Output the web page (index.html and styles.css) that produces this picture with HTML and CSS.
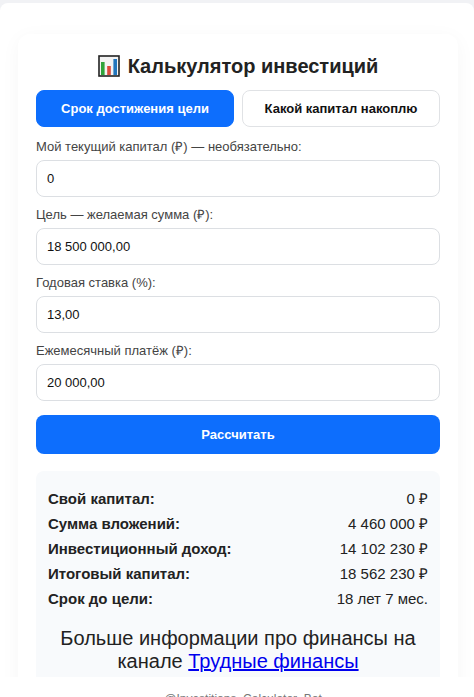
FILE: index.html
```html
<!DOCTYPE html>
<html lang="ru">
<head>
    <meta charset="UTF-8">
    <meta name="viewport" content="width=device-width, initial-scale=1.0">
    <title>Калькулятор инвестиций</title>
    <link rel="stylesheet" href="styles.css">
</head>
<body>
    <div class="sheet">
        <main class="content">
            <form class="card">
                <h1 class="title">
                    <svg class="title-icon" viewBox="0 0 22 22" aria-hidden="true">
                        <rect x="1" y="1" width="20" height="20" fill="#f3f3f3" stroke="#222" stroke-width="1.6"/>
                        <rect x="3" y="7" width="3.6" height="13" fill="#2fa33a"/>
                        <rect x="9.2" y="11" width="3.6" height="9" fill="#dc4a3c"/>
                        <rect x="15.4" y="4" width="3.6" height="16" fill="#2276bd"/>
                    </svg>
                    Калькулятор инвестиций
                </h1>
                <div class="tabs">
                    <button type="button" class="tab active">Срок достижения цели</button>
                    <button type="button" class="tab">Какой капитал накоплю</button>
                </div>
                <div class="field">
                    <label for="capital">Мой текущий капитал (₽) — необязательно:</label>
                    <input type="text" id="capital" name="capital" value="0">
                </div>
                <div class="field">
                    <label for="goal">Цель — желаемая сумма (₽):</label>
                    <input type="text" id="goal" name="goal" value="18 500 000,00">
                </div>
                <div class="field">
                    <label for="rate">Годовая ставка (%):</label>
                    <input type="text" id="rate" name="rate" value="13,00">
                </div>
                <div class="field">
                    <label for="payment">Ежемесячный платёж (₽):</label>
                    <input type="text" id="payment" name="payment" value="20 000,00">
                </div>
                <button type="button" class="submit">Рассчитать</button>
                <section class="result">
                    <div class="row"><strong>Свой капитал:</strong><span>0 ₽</span></div>
                    <div class="row"><strong>Сумма вложений:</strong><span>4 460 000 ₽</span></div>
                    <div class="row"><strong>Инвестиционный доход:</strong><span>14 102 230 ₽</span></div>
                    <div class="row"><strong>Итоговый капитал:</strong><span>18 562 230 ₽</span></div>
                    <div class="row"><strong>Срок до цели:</strong><span>18 лет 7 мес.</span></div>
                    <p class="more">Больше информации про финансы на канале <a href="#">Трудные финансы</a></p>
                </section>
            </form>
        </main>
        <footer class="bot">@Investitions_Calculator_Bot</footer>
    </div>
</body>
</html>
```

FILE: styles.css
```css
* {
    box-sizing: border-box;
}
body {
    margin: 0;
    padding-top: 3px;
    height: 100vh;
    overflow: hidden;
    font-family: "Liberation Sans", Arial, sans-serif;
    background-color: #f1f2f5;
    color: #222;
}
.sheet {
    display: flex;
    flex-direction: column;
    height: 100%;
    background: #fff;
    border-radius: 8px 8px 0 0;
    overflow: hidden;
}
.content {
    flex: 1;
    min-height: 0;
    padding: 31px 16px 0 18px;
    overflow: hidden;
}
.card {
    padding: 18px;
    background: #fff;
    border-radius: 12px;
    box-shadow: 0 4px 20px rgba(0, 0, 0, 0.04);
}
.title {
    display: flex;
    justify-content: center;
    align-items: center;
    gap: 8px;
    margin: 0 0 10px;
    font-size: 20px;
    line-height: 28px;
}
.title-icon {
    width: 22px;
    height: 22px;
}
.tabs {
    display: flex;
    gap: 8px;
    margin-bottom: 12px;
}
.tab {
    flex: 1;
    height: 37px;
    padding: 0;
    border: 1px solid #e0e2e5;
    border-radius: 8px;
    background: #fff;
    color: #111;
    font: bold 13px "Liberation Sans", Arial, sans-serif;
    cursor: pointer;
}
.tab.active {
    background: #0d6efd;
    border-color: #0d6efd;
    color: #fff;
}
.field {
    margin-bottom: 10px;
}
.field label {
    display: block;
    margin-bottom: 6px;
    font-size: 13px;
    line-height: 15px;
    color: #444;
}
.field input {
    display: block;
    width: 100%;
    height: 37px;
    padding: 0 10px;
    border: 1px solid #dcdfe3;
    border-radius: 8px;
    background: #fff;
    color: #111;
    font: 13px "Liberation Sans", Arial, sans-serif;
}
.submit {
    display: block;
    width: 100%;
    height: 39px;
    margin-top: 14px;
    border: none;
    border-radius: 8px;
    background: #0d6efd;
    color: #fff;
    font: bold 13px "Liberation Sans", Arial, sans-serif;
    cursor: pointer;
}
.result {
    margin-top: 17px;
    padding: 15px 12px;
    background: #f8fafc;
    border-radius: 8px;
}
.row {
    display: flex;
    justify-content: space-between;
    font-size: 15px;
    line-height: 25px;
}
.more {
    margin: 16px 0 0;
    font-size: 20px;
    line-height: 23px;
    text-align: center;
}
.more a {
    color: #0000ee;
}
.bot {
    height: 20px;
    padding: 15px 0 0 12px;
    overflow: hidden;
    font-size: 12px;
    line-height: 15px;
    text-align: center;
    white-space: nowrap;
    color: #777;
}
```
